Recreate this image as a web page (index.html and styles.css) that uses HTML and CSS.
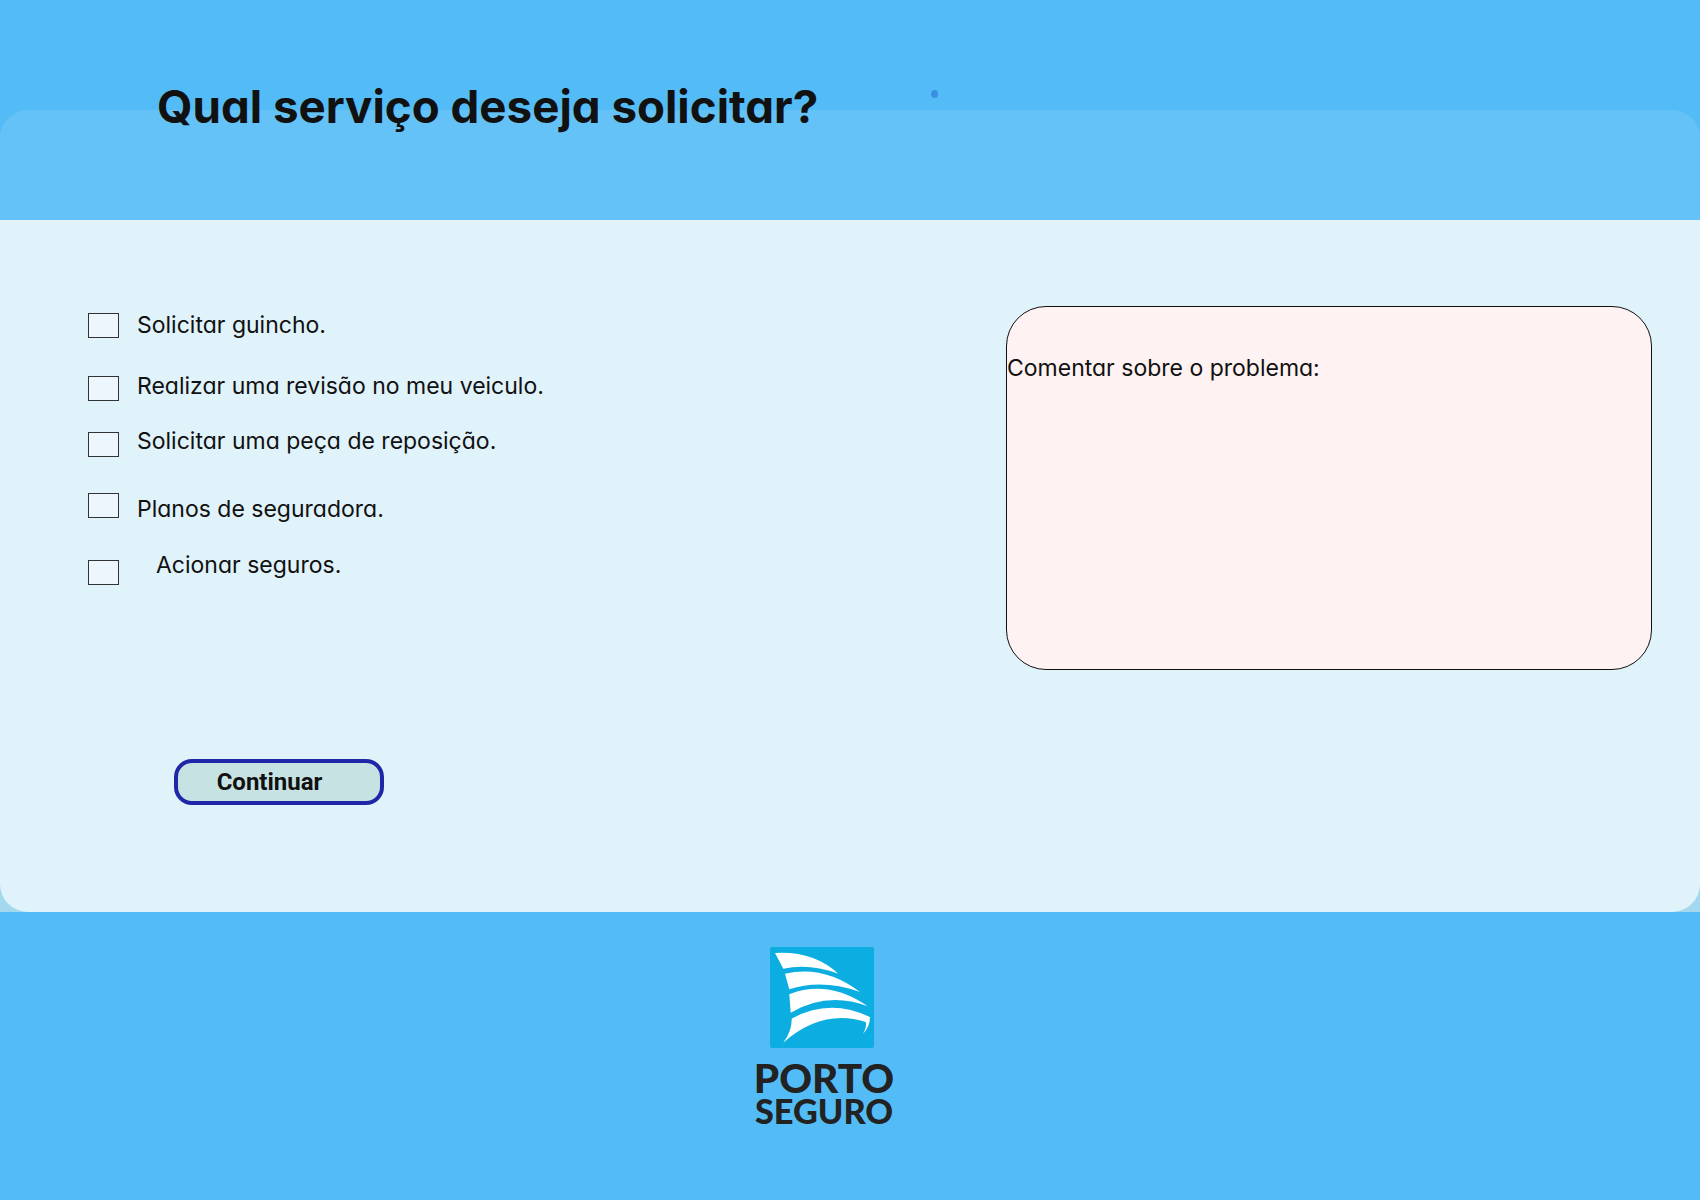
FILE: index.html
```html
<!DOCTYPE html>
<html lang="pt-BR">
<head>
  <meta charset="UTF-8">
  <meta name="viewport" content="width=device-width, initial-scale=1.0">
  <title>Porto Seguro</title>
  <link rel="stylesheet" href="styles.css">
</head>
<body>
  <header class="topo">
    <div class="faixa"></div>
    <h1 class="titulo">Qual serviço deseja solicitar?</h1>
    <span class="ponto"></span>
  </header>

  <div class="fundo-painel">
    <main class="painel">
      <div class="coluna-opcoes">
        <label class="opcao op1"><input type="checkbox"><span>Solicitar guincho.</span></label>
        <label class="opcao op2"><input type="checkbox"><span>Realizar uma revisão no meu veiculo.</span></label>
        <label class="opcao op3"><input type="checkbox"><span>Solicitar uma peça de reposição.</span></label>
        <label class="opcao op4"><input type="checkbox"><span>Planos de seguradora.</span></label>
        <label class="opcao op5"><input type="checkbox"><span>Acionar seguros.</span></label>
        <button class="continuar">Continuar</button>
      </div>
      <div class="comentario">Comentar sobre o problema:</div>
    </main>
  </div>

  <footer class="rodape">
    <div class="logo">
      <svg class="logo-icone" width="104" height="101" viewBox="0 0 104 101">
        <rect width="104" height="101" rx="2" fill="#0cade0"/>
        <g fill="#fff">
          <path d="M5 6Q43.3 3.7 68.3 26.7Q39.3 16 13.3 21.7Z"/>
          <path d="M15 26.7Q54.3 17.7 90 45Q52 31.7 19.3 42.3Z"/>
          <path d="M19.3 47.3Q58.3 32 97.7 59.3Q57.7 44.3 20.7 65.7Z"/>
          <path d="M21.7 71.7Q59.3 50.7 100 70Q100 80 92.7 87.3Q97 80 95.7 75Q52.3 61.3 13.3 95.7Q22 84 21.7 71.7Z"/>
        </g>
      </svg>
      <div class="logo-porto">PORTO</div>
      <div class="logo-seguro">SEGURO</div>
    </div>
  </footer>
</body>
</html>
```

FILE: styles.css
```css
* {
  box-sizing: border-box;
}
body {
  margin: 0;
  height: 1200px;
  overflow: hidden;
  background-color: #53bcf6;
  color: #111;
  font-family: "Inter", sans-serif;
  font-feature-settings: "cv11";
}
.topo {
  position: relative;
  height: 220px;
}
.faixa {
  position: absolute;
  left: 0;
  right: 0;
  top: 110px;
  bottom: 0;
  background-color: #65c2f6;
  border-radius: 28px 28px 0 0;
}
.titulo {
  position: absolute;
  left: 157px;
  top: 74px;
  margin: 0;
  font-size: 45.7px;
  font-weight: 700;
  line-height: 66px;
  white-space: nowrap;
}
.ponto {
  position: absolute;
  left: 931px;
  top: 90px;
  width: 7px;
  height: 8px;
  border-radius: 50%;
  background-color: #3b8fe2;
}
.fundo-painel {
  background-color: #a3d8ef;
}
.painel {
  display: flex;
  justify-content: space-between;
  height: 692px;
  padding: 86px 48px 0 88px;
  background-color: #e0f2fa;
  border-radius: 0 0 28px 28px;
}
.coluna-opcoes {
  display: flex;
  flex-direction: column;
  align-items: flex-start;
  padding-top: 3px;
}
.opcao {
  display: flex;
  font-size: 23px;
  line-height: 32px;
}
.opcao input {
  appearance: none;
  width: 31px;
  height: 25px;
  margin: 0 18px 0 0;
  background-color: #edf6fd;
  border: 1px solid #333;
}
.op1 input {
  margin-top: 4px;
}
.op2 {
  margin-top: 29px;
}
.op2 input {
  margin-top: 6px;
}
.op3 {
  margin-top: 23px;
}
.op3 input {
  margin-top: 7px;
}
.op4 {
  margin-top: 36px;
}
.op5 {
  margin-top: 24px;
}
.op5 input {
  margin-top: 11px;
}
.op5 span {
  margin-left: 19px;
}
.continuar {
  width: 210px;
  height: 46px;
  margin: 174px 0 0 86px;
  padding: 0 19px 0 0;
  background-color: #c6e2e2;
  border: 4px solid #1f27a8;
  border-radius: 18px;
  color: #111;
  font-family: "Roboto", sans-serif;
  font-size: 24px;
  font-weight: 700;
}
.comentario {
  width: 646px;
  height: 364px;
  padding-top: 44px;
  background-color: #fff2f2;
  border: 1px solid #111;
  border-radius: 40px;
  font-size: 23px;
  line-height: 34px;
}
.rodape {
  display: flex;
  justify-content: center;
  padding: 35px 56px 0 0;
}
.logo {
  display: flex;
  flex-direction: column;
  align-items: center;
  color: #222;
  font-family: "Lato", sans-serif;
  font-weight: 900;
}
.logo-porto {
  margin-top: 12px;
  padding-left: 4px;
  font-size: 40.5px;
  line-height: 36px;
}
.logo-seguro {
  padding-left: 4px;
  font-size: 34.3px;
  line-height: 30px;
}
```
